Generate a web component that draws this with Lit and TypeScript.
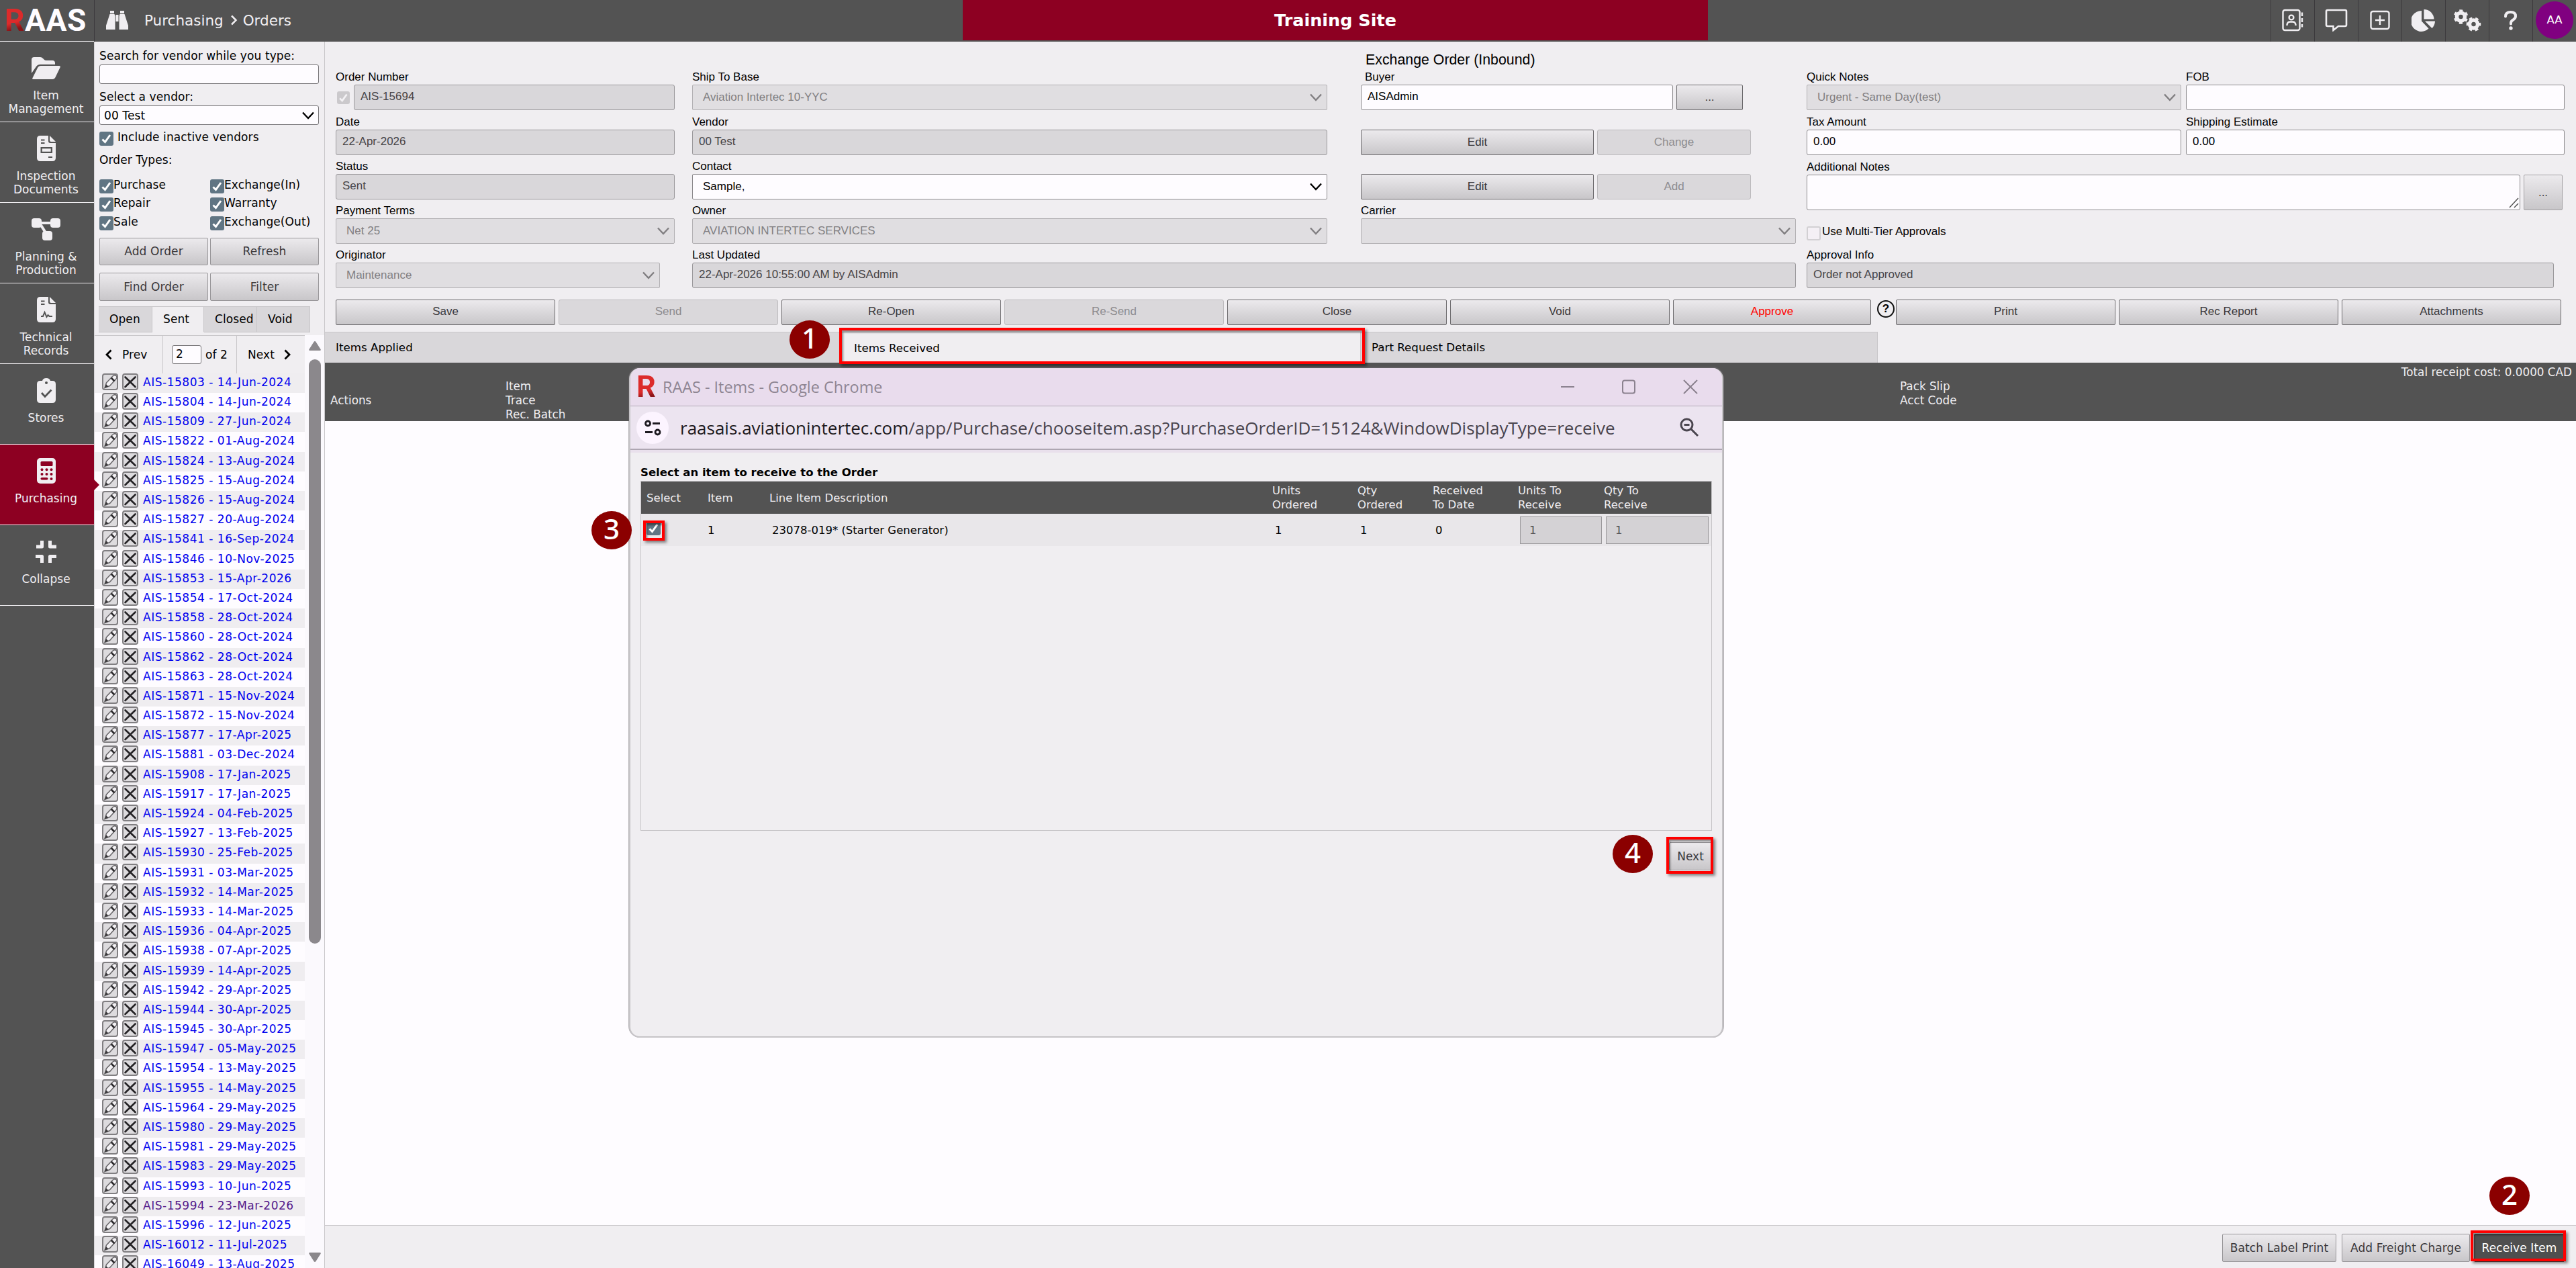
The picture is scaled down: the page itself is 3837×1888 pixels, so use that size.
import { LitElement, html, css, svg, nothing } from 'lit';
import type { TemplateResult } from 'lit';
import { customElement, property } from 'lit/decorators.js';
import { classMap } from 'lit/directives/class-map.js';

const shared = css`
  * {
    box-sizing: border-box;
  }
  svg {
    display: block;
    flex: none;
  }
  .btn {
    display: flex;
    align-items: center;
    justify-content: center;
    white-space: nowrap;
    color: #3a383b;
    background: linear-gradient(#eceaed, #c8c6c9);
    border: 1px solid #979598;
    border-radius: 2px;
  }
  .check {
    display: inline-block;
    flex: none;
    width: 21px;
    height: 21px;
    border-radius: 3px;
    background: #607583;
    color: #fff;
  }
  .check svg {
    width: 100%;
    height: 100%;
  }
`;

const checkMark = html`
  <svg viewBox="0 0 21 21"><path d="M4.5 11.5 8.5 15.5 16 5" fill="none" stroke="currentColor" stroke-width="3" /></svg>
`;

const chevron = html`
  <svg width="18" height="12" viewBox="0 0 18 12"><path d="M1 1.5 9 10 17 1.5" fill="none" stroke="currentColor" stroke-width="2.4" /></svg>
`;

const navIcons: Record<string, TemplateResult> = {
  folder: svg`<path d="M0 24V4Q0 0 4 0H13Q15 0 17 2L19 4Q20 5 22 5H31Q35 5 35 9V11H13Q9 11 7 14Z"/><path d="M1.500 31 9 16Q10.500 13 14 13H41Q43.500 13 42.500 15.500L36 29Q34.500 33 31 33H2.500Q.5 33 1.500 31Z"/>`,
  inspection: svg`<path fill-rule="evenodd" d="M5 0H17V8Q17 11 20 11H28V33Q28 38 23 38H5Q0 38 0 33V5Q0 0 5 0ZM6 5.500V7.500H11.500V5.500ZM6 10V12H11.500V10ZM5.500 17V26H23V17ZM7.800 19.200H20.700V23.800H7.800ZM17 31V33H23V31Z"/><path d="M19 0 28 9H21Q19 9 19 7Z"/>`,
  planning: svg`<rect width="15" height="14" rx="4"/><rect x="28" width="15" height="14" rx="4"/><rect x="16" y="19" width="15" height="14" rx="4"/><path d="M14 5H29V9H14ZM12 11 15.500 9 22.500 20 19 22Z"/>`,
  records: svg`<path d="M5 0H17V8Q17 11 20 11H28V33Q28 38 23 38H5Q0 38 0 33V5Q0 0 5 0Z"/><path d="M19 0 28 9H21Q19 9 19 7Z"/><path d="M6 6.500H11.500M6 11H11.500M6 29H9L11.500 23 14.500 30 16.500 27 18.500 29H23" fill="none" stroke="#535353" stroke-width="2"/>`,
  stores: svg`<path d="M5 4H8Q9 0 14 0 19 0 20 4H23Q28 4 28 9V32Q28 37 23 37H5Q0 37 0 32V9Q0 4 5 4Z"/><circle cx="14" cy="7" r="2" fill="#535353"/><path d="M7 22 12 27.500 21.500 17.500" fill="none" stroke="#535353" stroke-width="2.800"/>`,
  calculator: svg`<rect width="28" height="38" rx="5"/><g fill="#8d0022"><rect x="5.500" y="5" width="18" height="7" rx="1.500"/><circle cx="7.500" cy="17.300" r="2"/><circle cx="14.500" cy="17.300" r="2"/><circle cx="21.500" cy="17.300" r="2"/><circle cx="7.500" cy="24" r="2"/><circle cx="14.500" cy="24" r="2"/><circle cx="21.500" cy="24" r="2"/><rect x="5.500" y="29" width="11" height="3.600" rx="1.800"/><circle cx="21.500" cy="31" r="2"/></g>`,
  collapse: svg`<path d="M10.500 0V9H2M22.500 0V9H32M10.500 33V23.500H1M22.500 33V23.500H32" fill="none" stroke="currentColor" stroke-width="5" stroke-linejoin="round" stroke-linecap="butt"/>`,
};

interface NavEntry {
  icon: string;
  width: number;
  height: number;
  lines: string[];
  active?: boolean;
}

const navEntries: NavEntry[] = [
  { icon: 'folder', width: 43, height: 33, lines: ['Item', 'Management'] },
  { icon: 'inspection', width: 28, height: 38, lines: ['Inspection', 'Documents'] },
  { icon: 'planning', width: 43, height: 33, lines: ['Planning &', 'Production'] },
  { icon: 'records', width: 28, height: 38, lines: ['Technical', 'Records'] },
  { icon: 'stores', width: 28, height: 37, lines: ['Stores'] },
  { icon: 'calculator', width: 28, height: 38, lines: ['Purchasing'], active: true },
  { icon: 'collapse', width: 33, height: 33, lines: ['Collapse'] },
];

const toolIcons: TemplateResult[] = [
  html`<svg width="32" height="34" viewBox="0 0 32 34" fill="none" stroke="currentColor" stroke-width="2.4"><rect x="1.500" y="2" width="25" height="30" rx="3"/><circle cx="14" cy="13" r="3.400"/><path d="M7.500 25V24Q8 19.500 12 19.500H16Q20 19.500 20.500 24V25M30 5.500V11M30 14V20M30 23V27.500"/></svg>`,
  html`<svg width="34" height="34" viewBox="0 0 34 34" fill="none" stroke="currentColor" stroke-width="2.600"><path d="M4 2H30Q32 2 32 4V24Q32 26 30 26H20L12.500 32V26H4Q2 26 2 24V4Q2 2 4 2Z"/></svg>`,
  html`<svg width="30" height="30" viewBox="0 0 30 30" fill="none" stroke="currentColor" stroke-width="2.400"><rect x="1.500" y="2" width="27" height="26" rx="3"/><path d="M15 8V22M8 15H22"/></svg>`,
  html`<svg width="36" height="34" viewBox="0 0 36 34" fill="currentColor"><path d="M15 3V18.500L25.500 29.500A15.500 15.500 0 1 1 15 3Z"/><path d="M18.500 1A15 15 0 0 1 33.500 15.500H18.500Z"/><path d="M20 18.500H35A15 15 0 0 1 30.500 29Z"/></svg>`,
  html`<svg width="42" height="34" viewBox="0 0 42 34" fill="none" stroke="currentColor"><circle cx="11.500" cy="12" r="6" stroke-width="5.500"/><circle cx="11.500" cy="12" r="9.300" stroke-width="3" stroke-dasharray="4.870 4.870" stroke-dashoffset="2.430" transform="rotate(30 11.500 12)"/><circle cx="30.500" cy="23" r="6" stroke-width="5.500"/><circle cx="30.500" cy="23" r="9.300" stroke-width="3" stroke-dasharray="4.870 4.870" stroke-dashoffset="2.430"/></svg>`,
  html`<svg width="22" height="30" viewBox="0 0 22 30" fill="none" stroke="currentColor" stroke-width="4"><path d="M3 9.500Q3 3 10.500 3 18 3 18 9 18 12 15 14 11 16.500 11 19V20.500" stroke-linecap="round"/><circle cx="11" cy="27" r="2.700" fill="currentColor" stroke="none"/></svg>`,
];

const orders: string[] = [
  '15803 - 14-Jun-2024', '15804 - 14-Jun-2024', '15809 - 27-Jun-2024', '15822 - 01-Aug-2024',
  '15824 - 13-Aug-2024', '15825 - 15-Aug-2024', '15826 - 15-Aug-2024', '15827 - 20-Aug-2024',
  '15841 - 16-Sep-2024', '15846 - 10-Nov-2025', '15853 - 15-Apr-2026', '15854 - 17-Oct-2024',
  '15858 - 28-Oct-2024', '15860 - 28-Oct-2024', '15862 - 28-Oct-2024', '15863 - 28-Oct-2024',
  '15871 - 15-Nov-2024', '15872 - 15-Nov-2024', '15877 - 17-Apr-2025', '15881 - 03-Dec-2024',
  '15908 - 17-Jan-2025', '15917 - 17-Jan-2025', '15924 - 04-Feb-2025', '15927 - 13-Feb-2025',
  '15930 - 25-Feb-2025', '15931 - 03-Mar-2025', '15932 - 14-Mar-2025', '15933 - 14-Mar-2025',
  '15936 - 04-Apr-2025', '15938 - 07-Apr-2025', '15939 - 14-Apr-2025', '15942 - 29-Apr-2025',
  '15944 - 30-Apr-2025', '15945 - 30-Apr-2025', '15947 - 05-May-2025', '15954 - 13-May-2025',
  '15955 - 14-May-2025', '15964 - 29-May-2025', '15980 - 29-May-2025', '15981 - 29-May-2025',
  '15983 - 29-May-2025', '15993 - 10-Jun-2025', '15994 - 23-Mar-2026', '15996 - 12-Jun-2025',
  '16012 - 11-Jul-2025', '16049 - 13-Aug-2025',
];
const visitedOrder = '15994';

@customElement('order-panel')
export class OrderPanel extends LitElement {
  static styles = [
    shared,
    css`
      :host {
        display: flex;
        flex-direction: column;
        width: 344px;
        height: 1826px;
        overflow: hidden;
        padding-top: 10px;
        background: #f0eef1;
        border-left: 1px solid #d5d3d6;
        border-right: 1px solid #c8c6c9;
        letter-spacing: 0.1px;
        white-space: nowrap;
      }
      .filters {
        width: 327px;
        margin-left: 7px;
        flex: none;
      }
      .label {
        line-height: 22px;
      }
      .box {
        height: 29px;
        display: flex;
        align-items: center;
        justify-content: space-between;
        padding: 0 6px;
        background: #fefcff;
        border: 1px solid #767477;
        border-radius: 3px;
      }
      .search {
        margin: 2px 0 8px;
      }
      .vendor {
        margin: 2px 0 10px;
      }
      .option {
        display: flex;
        line-height: 17px;
      }
      .inactive {
        gap: 6px;
        margin-bottom: 10px;
      }
      .types {
        display: grid;
        grid-template-columns: 165px 162px;
        grid-auto-rows: 27.3px;
        margin: 18px 0 5px;
      }
      .actions {
        display: grid;
        grid-template-columns: 162px 162px;
        grid-template-rows: 41px 42px;
        gap: 11px 3px;
      }
      .tabs {
        display: flex;
        flex: none;
        margin: 8px 0 4px 6px;
        height: 39px;
      }
      .tab {
        padding-left: 16px;
        line-height: 36px;
        background: #d9d7da;
        border: 1px solid #c8c6c9;
        border-left: none;
        width: 79px;
      }
      .tab.open {
        width: 80px;
      }
      .tab.active {
        background: #f0eef1;
        border-bottom-color: #f0eef1;
        width: 77px;
      }
      .browse {
        display: flex;
        flex: 1;
        min-height: 0;
      }
      .results {
        width: 313px;
        overflow: hidden;
      }
      .pager {
        display: flex;
        height: 57px;
        border-top: 1px solid #c8c6c9;
      }
      .page {
        display: flex;
        align-items: center;
      }
      .prev {
        width: 102px;
        padding-left: 16px;
        gap: 15px;
        border-right: 1px solid #c8c6c9;
      }
      .current {
        width: 110px;
        padding-left: 13px;
        gap: 6px;
        border-right: 1px solid #c8c6c9;
      }
      .number {
        width: 44px;
        height: 28px;
        background: #fefcff;
        border: 1px solid #767477;
        border-radius: 3px;
        padding-left: 5px;
        line-height: 25px;
      }
      .next {
        padding-left: 16px;
        gap: 14px;
      }
      .order {
        display: flex;
        height: 29.2px;
        padding-left: 11px;
        background: #fefcff;
      }
      .order:nth-child(odd) {
        background: #efedf0;
      }
      .order svg {
        margin-right: 6px;
      }
      .link {
        color: #0000ee;
        letter-spacing: 0.52px;
        line-height: 26px;
        margin-left: 1px;
      }
      .link.visited {
        color: #551a8b;
      }
      .scrollbar {
        display: flex;
        flex-direction: column;
        align-items: center;
        width: 29px;
        padding: 9px 0;
        background: #fbf9fd;
        color: #8b888c;
      }
      .thumb {
        width: 18px;
        height: 870px;
        margin: 13px 0 auto;
        border-radius: 9px;
        background: #8b888c;
      }
    `,
  ];

  private option(label: string): TemplateResult {
    return html`<div class="option"><span class="check">${checkMark}</span>${label}</div>`;
  }

  private order(text: string): TemplateResult {
    return html`
      <div class="order">
        <svg width="24" height="25" viewBox="0 0 24 25"><rect x="1" y="1" width="22" height="23" rx="3" fill="#dddbde" stroke="#807e81" stroke-width="2" /><path d="M4 21.500 6.500 14 16 4Q19 1.500 21 3.500T21 8L11.500 18.500Z" fill="#f4f2f5" stroke="#6a686b" stroke-width="1.500" /><path d="M14.500 5.500 19.500 10.500 17.500 12.500 12.800 7.500Z" fill="#2d2b2e" /><path d="M4 21.500 6 16 9.500 19.500Z" fill="#3a383b" /></svg>
        <svg width="24" height="25" viewBox="0 0 24 25"><rect x="1" y="1" width="22" height="23" rx="3" fill="#dddbde" stroke="#807e81" stroke-width="2" /><path d="M4.500 5.500 19.500 20M19.500 5.500 4.500 20" stroke="#242225" stroke-width="2.600" stroke-linecap="round" /></svg>
        <span class=${classMap({ link: true, visited: text.startsWith(visitedOrder) })}>AIS-${text}</span>
      </div>
    `;
  }

  render() {
    return html`
      <div class="filters">
        <div class="label">Search for vendor while you type:</div>
        <div class="box search"></div>
        <div class="label">Select a vendor:</div>
        <div class="box vendor">00 Test ${chevron}</div>
        <div class="option inactive"><span class="check">${checkMark}</span>Include inactive vendors</div>
        <div class="label">Order Types:</div>
        <div class="types">
          ${['Purchase', 'Exchange(In)', 'Repair', 'Warranty', 'Sale', 'Exchange(Out)'].map((t) => this.option(t))}
        </div>
        <div class="actions">
          ${['Add Order', 'Refresh', 'Find Order', 'Filter'].map((t) => html`<div class="btn">${t}</div>`)}
        </div>
      </div>
      <div class="tabs">
        <div class="tab open">Open</div>
        <div class="tab active">Sent</div>
        <div class="tab">Closed</div>
        <div class="tab">Void</div>
      </div>
      <div class="browse">
        <div class="results">
          <div class="pager">
            <div class="page prev">
              <svg width="10" height="16" viewBox="0 0 10 16"><path d="M8.500 1.500 2 8 8.500 14.500" fill="none" stroke="#000" stroke-width="2.800" /></svg>Prev
            </div>
            <div class="page current"><span class="number">2</span>of 2</div>
            <div class="page next">
              Next<svg width="10" height="16" viewBox="0 0 10 16"><path d="M1.500 1.500 8 8 1.500 14.500" fill="none" stroke="#000" stroke-width="2.800" /></svg>
            </div>
          </div>
          <div>${orders.map((o) => this.order(o))}</div>
        </div>
        <div class="scrollbar">
          <svg width="18" height="14" viewBox="0 0 18 14"><path d="M7.500 1Q9 -1 10.500 1L17.500 12Q18.500 14 16.500 14H1.500Q-.5 14 .5 12Z" fill="currentColor" /></svg>
          <div class="thumb"></div>
          <svg width="18" height="14" viewBox="0 0 18 14"><path d="M7.500 13Q9 15 10.500 13L17.500 2Q18.500 0 16.500 0H1.500Q-.5 0 .5 2Z" fill="currentColor" /></svg>
        </div>
      </div>
    `;
  }
}

@customElement('item-dialog')
export class ItemDialog extends LitElement {
  static styles = [
    shared,
    css`
      :host {
        display: flex;
        flex-direction: column;
        overflow: hidden;
        background: #f0eef1;
        border: 2px solid #c6c4c7;
        border-top: none;
        border-radius: 16px;
        box-shadow: 0 -1px 0 1px rgba(110, 106, 112, 0.5);
      }
      .titlebar {
        display: flex;
        align-items: center;
        flex: none;
        height: 57px;
        padding-left: 11px;
        background: #e9dced;
        border-bottom: 1px solid #b3a9b6;
        font-family: 'Open Sans', sans-serif;
        font-size: 23.4px;
        color: #8f8693;
      }
      .mark {
        font: bold 45px/46px Roboto, sans-serif;
        width: 39px;
        margin-left: -2px;
        color: transparent;
        background: linear-gradient(165deg, #dc2b2b 58%, #8a1518 75%);
        background-clip: text;
        -webkit-background-clip: text;
      }
      .controls {
        display: flex;
        align-items: center;
        gap: 71px;
        margin: 0 36px 0 auto;
      }
      .address {
        display: flex;
        align-items: center;
        flex: none;
        height: 65px;
        padding-left: 9px;
        background: #ece4f0;
        border-bottom: 2px solid #aea6b2;
        font-family: 'Open Sans', sans-serif;
        font-size: 26px;
        color: #4a454e;
        white-space: nowrap;
      }
      .site {
        display: flex;
        align-items: center;
        justify-content: center;
        width: 48px;
        height: 48px;
        border-radius: 50%;
        background: #fcf4ff;
        margin-right: 17px;
      }
      .host {
        color: #1d1a20;
      }
      .zoom {
        margin: 0 34px 0 auto;
      }
      .edge {
        height: 4px;
        flex: none;
        background: #e9e0ec;
      }
      .content {
        padding: 19px 15px 0 15px;
      }
      .heading {
        font-weight: bold;
        font-size: 16.5px;
        line-height: 22px;
        margin-bottom: 1px;
      }
      .table {
        height: 521px;
        border: 1px solid #c6c4c7;
      }
      .row {
        display: grid;
        grid-template-columns: 91px 92px 749px 127px 112px 127px 128px 158px;
        align-items: center;
        height: 48px;
        padding-left: 8px;
        font-size: 16.5px;
        line-height: 21px;
        background: #e9e7ea;
      }
      .row.head {
        background: #535353;
        color: #f0eef1;
      }
      .row:not(.head) .cell {
        padding-left: 4px;
      }
      .row:not(.head) .number {
        padding-left: 0;
      }
      .cell.select {
        padding: 0 !important;
      }
      .qty {
        height: 41px;
        width: 122px;
        margin-left: 3px;
        padding-left: 13px;
        line-height: 40px;
        color: #565457;
        background: #d4d2d5;
        border: 1px solid #9a989b;
      }
      .qty.wide {
        width: 153px;
      }
      .next {
        width: 64px;
        height: 42px;
        margin: 17px 0 0 auto;
      }
    `,
  ];

  render() {
    return html`
      <div class="titlebar">
        <span class="mark">R</span>RAAS - Items - Google Chrome
        <svg class="controls" width="204" height="22" viewBox="0 0 204 22" fill="none" stroke="#8b828f" stroke-width="2">
          <path d="M0 11H20M183 1 203 21M203 1 183 21" />
          <rect x="92" y="1.500" width="18" height="19" rx="3" />
        </svg>
      </div>
      <div class="address">
        <span class="site">
          <svg width="26" height="24" viewBox="0 0 26 24" fill="none" stroke="#1d1a20" stroke-width="2.800"><circle cx="6" cy="5.500" r="3.500" /><path d="M13 5.500H24M2 18.500H13" /><circle cx="20.500" cy="18.500" r="3.500" /></svg>
        </span>
        <span class="host">raasais.aviationintertec.com</span>/app/Purchase/chooseitem.asp?PurchaseOrderID=15124&amp;WindowDisplayType=receive
        <svg class="zoom" width="29" height="29" viewBox="0 0 29 29" fill="none" stroke="#4a454e" stroke-width="3"><circle cx="10.500" cy="10.500" r="8.500" /><path d="M17 17 27 27M6.500 10.500H14.500" /></svg>
      </div>
      <div class="edge"></div>
      <div class="content">
        <div class="heading">Select an item to receive to the Order</div>
        <div class="table">
          <div class="row head">
            <div>Select</div>
            <div>Item</div>
            <div>Line Item Description</div>
            <div>Units<br />Ordered</div>
            <div>Qty<br />Ordered</div>
            <div>Received<br />To Date</div>
            <div>Units To<br />Receive</div>
            <div>Qty To<br />Receive</div>
          </div>
          <div class="row">
            <div class="cell select"><span class="check">${checkMark}</span></div>
            <div class="cell number">1</div>
            <div class="cell">23078-019* (Starter Generator)</div>
            <div class="cell">1</div>
            <div class="cell">1</div>
            <div class="cell">0</div>
            <div class="qty">1</div>
            <div class="qty wide">1</div>
          </div>
        </div>
        <div class="btn next">Next</div>
      </div>
    `;
  }
}

@customElement('step-badge')
export class StepBadge extends LitElement {
  @property({ type: Number })
  public step = 1;

  static styles = css`
    :host {
      display: flex;
      align-items: center;
      justify-content: center;
      width: 60px;
      height: 57px;
      border-radius: 50%;
      background: #8b0000;
      color: #fff;
      font: 500 42px/50px 'Noto Sans', sans-serif;
    }
    .digit {
      margin-top: -6px;
    }
  `;

  render() {
    return html`<span class="digit">${this.step}</span>`;
  }
}

@customElement('app-root')
export class AppRoot extends LitElement {
  static styles = [
    shared,
    css`
      :host {
        display: block;
        position: relative;
        width: 3837px;
        height: 1888px;
        overflow: hidden;
        background: #fefcff;
        color: #000;
        font-family: Verdana, 'DejaVu Sans', sans-serif;
        font-size: 17px;
      }
      .shell {
        display: grid;
        grid-template-columns: 140px 1fr;
        height: 100%;
      }
      .nav {
        background: #535353;
        color: #f0eef1;
      }
      .logo {
        height: 62px;
        padding-left: 7px;
        border-bottom: 1px solid #f0eef1;
        font: bold 46px/60px Roboto, sans-serif;
        color: #fefcff;
        letter-spacing: 0.6px;
      }
      .logo-r {
        color: transparent;
        background: linear-gradient(165deg, #dc2b2b 55%, #8a1518 72%);
        background-clip: text;
        -webkit-background-clip: text;
      }
      .nav-item {
        position: relative;
        display: flex;
        flex-direction: column;
        align-items: center;
        height: 120px;
        padding-right: 3px;
        border-bottom: 1px solid #f0eef1;
        line-height: 20px;
        text-align: center;
      }
      .nav-item.active {
        background: #8d0022;
      }
      .pointer {
        position: absolute;
        z-index: 1;
        left: 140px;
        top: 52px;
      }
      .nav-icon {
        display: flex;
        align-items: center;
        height: 44px;
        margin: 17px 0 9px;
      }
      .header {
        display: grid;
        grid-template-columns: 1293px 1110px 1fr;
        height: 62px;
        background: #535353;
        border-left: 1px solid #3c3a3d;
        color: #f0eef1;
      }
      .crumbs {
        display: flex;
        align-items: center;
        padding: 0 0 2px 17px;
        font-size: 21.5px;
      }
      .crumbs .trail {
        margin: 0 8px 0 10px;
      }
      .binoculars {
        margin-right: 24px;
      }
      .banner {
        display: flex;
        align-items: center;
        justify-content: center;
        height: 60px;
        background: #8d0022;
        color: #fff;
        font-weight: bold;
        font-size: 25.5px;
      }
      .tools {
        display: flex;
        justify-content: flex-end;
      }
      .tool {
        display: flex;
        align-items: center;
        justify-content: center;
        width: 65px;
        padding-bottom: 2px;
        border-left: 1px solid #3c3a3d;
      }
      .avatar {
        width: 56px;
        height: 56px;
        border-radius: 50%;
        background: #800080;
        color: #fff;
        text-align: center;
        line-height: 56px;
        font-size: 16.5px;
      }
      .body {
        display: grid;
        grid-template-columns: 344px 1fr;
      }
      .main {
        display: flex;
        flex-direction: column;
        height: 1826px;
        background: #f0eef1;
      }
      .form {
        display: grid;
        grid-template-columns: 531px 996px 664px 1129px;
        grid-template-rows: 102px 67px 66px 66px 66px;
        align-items: end;
        padding-left: 16px;
        font-family: 'Liberation Sans', sans-serif;
        white-space: nowrap;
      }
      .caption {
        line-height: 20px;
        margin-bottom: 1.5px;
      }
      .box {
        display: flex;
        align-items: center;
        justify-content: space-between;
        height: 38px;
        padding: 0 9px 2px;
        background: #fefcff;
        border: 1px solid #8b898c;
        border-radius: 3px;
      }
      .box.locked {
        color: #464447;
        background: #d9d7da;
        border-color: #9a989b;
      }
      .box.select {
        padding: 0 7px 0 15px;
        border-radius: 2px;
      }
      .box.select.locked {
        color: #807e81;
        background: #e0dee1;
        border-color: #b2b0b3;
      }
      .narrow {
        width: 505px;
      }
      .originator {
        width: 483px;
      }
      .medium {
        width: 946px;
      }
      .updated {
        grid-column: 2 / 4;
        width: 1644px;
      }
      .carrier {
        width: 648px;
      }
      .inline {
        display: flex;
        align-items: center;
      }
      .numbered {
        padding-left: 2px;
        gap: 6px;
      }
      .numbered .check {
        width: 19px;
        height: 19px;
        background: #cbc9cc;
        color: #f4f2f5;
      }
      .grow {
        flex: 1;
      }
      .exchange {
        font-size: 21.33px;
        line-height: 24px;
        margin: 0 0 4px 7px;
      }
      .buyer {
        width: 569px;
      }
      .buyer .caption {
        margin-left: 6px;
      }
      .form .btn,
      .commands .btn {
        border-color: #6b696c;
      }
      .btn.off {
        color: #8d8b8e;
        background: #dad8db !important;
        border-color: #bcbabd !important;
        border-radius: 3px;
      }
      .pair {
        display: grid;
        grid-template-columns: 347px 229px;
        gap: 5px;
        height: 38px;
      }
      .dots {
        width: 99px;
        height: 38px;
        margin-left: 5px;
      }
      .halves {
        display: grid;
        grid-template-columns: 558px 564px;
        gap: 7px;
      }
      .notes {
        grid-column: 4;
        grid-row: 3 / 5;
      }
      .area {
        width: 1063px;
        height: 53px;
        align-items: flex-end;
        justify-content: flex-end;
        padding: 0 1px 2px;
      }
      .form .notes .btn {
        width: 58px;
        height: 53px;
        margin-left: 5px;
        border-color: #a3a1a4;
      }
      .tier {
        margin: 24px 0 5px;
        line-height: 15px;
        align-items: flex-start;
        gap: 2px;
      }
      .tier .check {
        background: #f4f0f5;
        border: 2px solid #d2d0d3;
      }
      .approval {
        width: 1113px;
      }
      .commands {
        display: flex;
        gap: 5px;
        padding: 17px 0 10px 16px;
        font-family: 'Liberation Sans', sans-serif;
      }
      .commands .btn {
        width: 327px;
        height: 38px;
        padding-bottom: 2px;
      }
      .commands .btn.approve {
        width: 295px;
        color: #ff0000;
      }
      .help {
        margin: 1px -3px 0 4px;
        width: 26px;
        height: 26px;
        border: 2px solid #111;
        border-radius: 50%;
        text-align: center;
        line-height: 22px;
        font-weight: bold;
      }
      .detail-tabs {
        display: grid;
        grid-template-columns: 768px 775px 770px;
        height: 46px;
      }
      .detail-tab {
        padding-left: 16px;
        line-height: 44px;
        font-size: 16.7px;
        background: #d9d7da;
        border-top: 1px solid #c8c6c9;
        border-right: 1px solid #c8c6c9;
        border-bottom: 1px solid #c8c6c9;
      }
      .detail-tab.active {
        background: #f0eef1;
        padding-left: 20px;
        line-height: 46px;
      }
      .band {
        height: 87px;
        padding-top: 4px;
        line-height: 21px;
        font-size: 16.8px;
        background: #535353;
        color: #f0eef1;
      }
      .total {
        text-align: right;
        padding-right: 6px;
      }
      .heads {
        display: grid;
        grid-template-columns: 261px 2077px 1fr;
        padding-left: 8px;
      }
      .heads .middle {
        align-self: center;
      }
      .canvas {
        flex: 1;
        background: #fefcff;
      }
      .footer {
        display: flex;
        justify-content: flex-end;
        height: 64px;
        padding: 12px 17px 0 0;
        border-top: 1px solid #c8c6c9;
      }
      .footer .btn {
        height: 42px;
        margin-left: 8px;
        letter-spacing: 0.1px;
      }
      .batch {
        width: 170px;
      }
      .freight {
        width: 191px;
      }
      .footer .receive {
        width: 135px;
        background: #4f4f4f;
        border-color: #4f4f4f;
        color: #fff;
        margin-left: 6px;
      }
      .dialog {
        position: absolute;
        left: 937px;
        top: 548px;
        width: 1630px;
        height: 997px;
      }
      .mark-box,
      .badge {
        position: absolute;
      }
      .mark-box {
        border: 4px solid #ff0000;
        box-shadow: 3px 3px 4px rgba(0, 0, 0, 0.45), inset 2px 3px 3px rgba(0, 0, 0, 0.4);
      }
      .on-tab {
        left: 1250px;
        top: 488px;
        width: 783px;
        height: 54px;
      }
      .on-check {
        left: 958px;
        top: 775px;
        width: 32px;
        height: 30px;
      }
      .on-next {
        left: 2482px;
        top: 1246px;
        width: 70px;
        height: 55px;
      }
      .on-receive {
        left: 3680px;
        top: 1832px;
        width: 142px;
        height: 46px;
      }
      .b1 {
        left: 1176px;
        top: 477px;
      }
      .b2 {
        left: 3708px;
        top: 1752px;
      }
      .b3 {
        left: 881px;
        top: 761px;
      }
      .b4 {
        left: 2402px;
        top: 1243px;
      }
    `,
  ];

  private field(label: string, value: string, cls: Record<string, boolean>, wrap = ''): TemplateResult {
    return html`
      <div class=${wrap}>
        <div class="caption">${label}</div>
        <div class=${classMap({ box: true, ...cls })}>${value}${cls.select ? html`<span class="grow"></span>${chevron}` : nothing}</div>
      </div>
    `;
  }

  private renderNav(): TemplateResult {
    return html`
      <div class="nav">
        <div class="logo"><span class="logo-r">R</span>AAS</div>
        ${navEntries.map(
          (n) => html`
            <div class=${classMap({ 'nav-item': true, active: !!n.active })}>
              <div class="nav-icon">
                <svg width=${n.width} height=${n.height} viewBox="0 0 ${n.width} ${n.height}" fill="currentColor">${navIcons[n.icon]}</svg>
              </div>
              ${n.lines.map((l) => html`<span>${l}</span>`)}
              ${n.active
                ? html`<svg class="pointer" width="8" height="16" viewBox="0 0 8 16"><path d="M0 0 8 8 0 16Z" fill="#8d0022" /></svg>`
                : nothing}
            </div>
          `
        )}
      </div>
    `;
  }

  private renderHeader(): TemplateResult {
    return html`
      <div class="header">
        <div class="crumbs">
          <svg class="binoculars" width="33" height="28" viewBox="0 0 33 28" fill="currentColor"><path d="M6 0H12V4H6ZM21 0H27V4H21ZM5.500 5H12.500L13.500 8V28H0V22ZM27.500 5H20.500L19.500 8V28H33V22ZM14.500 6H18.500V16H14.500Z" /></svg>
          Purchasing
          <svg class="trail" width="11" height="16" viewBox="0 0 11 16"><path d="M2 1.500 8.500 8 2 14.500" fill="none" stroke="currentColor" stroke-width="2.500" /></svg>
          Orders
        </div>
        <div class="banner">Training Site</div>
        <div class="tools">
          ${toolIcons.map((icon) => html`<div class="tool">${icon}</div>`)}
          <div class="tool"><span class="avatar">AA</span></div>
        </div>
      </div>
    `;
  }

  private renderForm(): TemplateResult {
    const locked = { locked: true };
    const lockedSelect = { locked: true, select: true };
    return html`
      <div class="form">
        <div class="narrow">
          <div class="caption">Order Number</div>
          <div class="inline numbered"><span class="check">${checkMark}</span><div class="box locked grow">AIS-15694</div></div>
        </div>
        ${this.field('Ship To Base', 'Aviation Intertec 10-YYC', lockedSelect, 'medium')}
        <div class="buyer">
          <div class="exchange">Exchange Order (Inbound)</div>
          <div class="caption">Buyer</div>
          <div class="inline"><div class="box grow">AISAdmin</div><div class="btn dots">...</div></div>
        </div>
        <div class="halves">
          ${this.field('Quick Notes', 'Urgent - Same Day(test)', lockedSelect)} ${this.field('FOB', '', {})}
        </div>

        ${this.field('Date', '22-Apr-2026', locked, 'narrow')} ${this.field('Vendor', '00 Test', locked, 'medium')}
        <div class="pair"><div class="btn">Edit</div><div class="btn off">Change</div></div>
        <div class="halves">${this.field('Tax Amount', '0.00', {})} ${this.field('Shipping Estimate', '0.00', {})}</div>

        ${this.field('Status', 'Sent', locked, 'narrow')} ${this.field('Contact', 'Sample,', { select: true }, 'medium')}
        <div class="pair"><div class="btn">Edit</div><div class="btn off">Add</div></div>
        <div class="notes">
          <div class="caption">Additional Notes</div>
          <div class="inline">
            <div class="box area">
              <svg width="16" height="16" viewBox="0 0 16 16"><path d="M2 15 15 1M9 15 15 9" stroke="#555" stroke-width="1.500" /></svg>
            </div>
            <div class="btn">...</div>
          </div>
          <div class="inline tier"><span class="check"></span>Use Multi-Tier Approvals</div>
        </div>

        ${this.field('Payment Terms', 'Net 25', lockedSelect, 'narrow')}
        ${this.field('Owner', 'AVIATION INTERTEC SERVICES', lockedSelect, 'medium')}
        ${this.field('Carrier', '', lockedSelect, 'carrier')}

        ${this.field('Originator', 'Maintenance', lockedSelect, 'originator')}
        ${this.field('Last Updated', '22-Apr-2026 10:55:00 AM by AISAdmin', locked, 'updated')}
        ${this.field('Approval Info', 'Order not Approved', locked, 'approval')}
      </div>
      <div class="commands">
        <div class="btn">Save</div>
        <div class="btn off">Send</div>
        <div class="btn">Re-Open</div>
        <div class="btn off">Re-Send</div>
        <div class="btn">Close</div>
        <div class="btn">Void</div>
        <div class="btn approve">Approve</div>
        <div class="help">?</div>
        <div class="btn">Print</div>
        <div class="btn">Rec Report</div>
        <div class="btn">Attachments</div>
      </div>
    `;
  }

  render() {
    return html`
      <div class="shell">
        ${this.renderNav()}
        <div>
          ${this.renderHeader()}
          <div class="body">
            <order-panel></order-panel>
            <div class="main">
              ${this.renderForm()}
              <div class="detail-tabs">
                <div class="detail-tab">Items Applied</div>
                <div class="detail-tab active">Items Received</div>
                <div class="detail-tab">Part Request Details</div>
              </div>
              <div class="band">
                <div class="total">Total receipt cost: 0.0000 CAD</div>
                <div class="heads">
                  <div class="middle">Actions</div>
                  <div>Item<br />Trace<br />Rec. Batch</div>
                  <div>Pack Slip<br />Acct Code</div>
                </div>
              </div>
              <div class="canvas"></div>
              <div class="footer">
                <div class="btn batch">Batch Label Print</div>
                <div class="btn freight">Add Freight Charge</div>
                <div class="btn receive">Receive Item</div>
              </div>
            </div>
          </div>
        </div>
      </div>
      <item-dialog class="dialog"></item-dialog>
      <div class="mark-box on-tab"></div>
      <div class="mark-box on-check"></div>
      <div class="mark-box on-next"></div>
      <div class="mark-box on-receive"></div>
      <step-badge class="badge b1" .step=${1}></step-badge>
      <step-badge class="badge b2" .step=${2}></step-badge>
      <step-badge class="badge b3" .step=${3}></step-badge>
      <step-badge class="badge b4" .step=${4}></step-badge>
    `;
  }
}

declare global {
  interface HTMLElementTagNameMap {
    'app-root': AppRoot;
    'order-panel': OrderPanel;
    'item-dialog': ItemDialog;
    'step-badge': StepBadge;
  }
}
